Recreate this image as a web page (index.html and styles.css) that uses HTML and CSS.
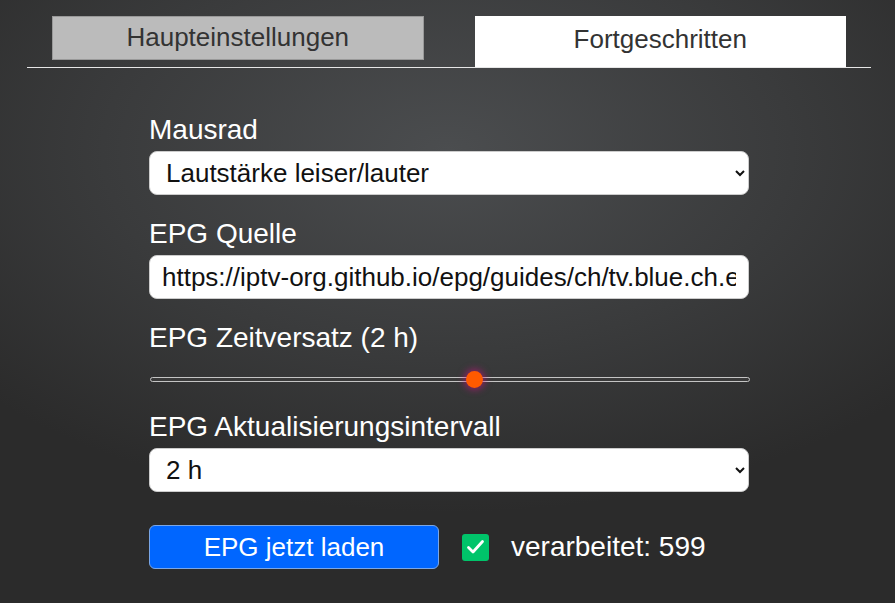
FILE: index.html
```html
<!DOCTYPE html>
<html lang="de">
<head>
    <meta charset="UTF-8">
    <meta name="viewport" content="width=device-width, initial-scale=1.0">
    <title>Einstellungen</title>
    <link rel="stylesheet" href="styles.css">
</head>
<body>
    <div class="settings">
        <div class="tabs">
            <div class="tab">Haupteinstellungen</div>
            <div class="tab active">Fortgeschritten</div>
        </div>

        <form class="panel">
            <label class="field-label" for="wheel">Mausrad</label>
            <select id="wheel" class="field">
                <option>Lautstärke leiser/lauter</option>
                <option>Kanal wechseln</option>
            </select>

            <label class="field-label" for="epgSource">EPG Quelle</label>
            <input type="text" id="epgSource" class="field" value="https://iptv-org.github.io/epg/guides/ch/tv.blue.ch.epg.xml">

            <label class="field-label" for="epgOffset">EPG Zeitversatz (2 h)</label>
            <input type="range" id="epgOffset" class="slider" min="-24" max="24" value="2">

            <label class="field-label" for="epgInterval">EPG Aktualisierungsintervall</label>
            <select id="epgInterval" class="field">
                <option>2 h</option>
                <option>6 h</option>
                <option>12 h</option>
            </select>

            <div class="actions">
                <button type="button" class="btn">EPG jetzt laden</button>
                <span class="check">
                    <svg width="19" height="16" viewBox="0 0 19 16"><path d="M2.5 8.5 L7 13 L16.5 2.5" fill="none" stroke="white" stroke-width="2.8" stroke-linecap="round" stroke-linejoin="round"/></svg>
                </span>
                <span class="status">verarbeitet: 599</span>
            </div>
        </form>
    </div>
</body>
</html>
```

FILE: styles.css
```css
html, body {
    height: 100%;
}
body {
    margin: 0;
    font-family: "Liberation Sans", Arial, sans-serif;
    background: radial-gradient(ellipse 70% 60% at 50% 25%, #4b4d4f 0%, #3a3b3c 55%, #2b2b2b 100%);
    color: white;
    overflow: hidden;
}
.settings {
    width: 844px;
    margin-left: 27px;
    padding-top: 16px;
}
.tabs {
    display: flex;
    align-items: flex-start;
    gap: 51px;
    padding: 0 25px;
    border-bottom: 1px solid #e6e6e6;
}
.tab {
    flex: 1 1 0;
    box-sizing: border-box;
    height: 44px;
    line-height: 41px;
    text-align: center;
    font-size: 26px;
    color: #333;
    background: #bbbbbb;
    border: 1px solid #999;
}
.tab.active {
    height: 51px;
    line-height: 44px;
    background: white;
    border-color: white;
}
.panel {
    width: 600px;
    margin: 0 auto;
    padding-top: 46px;
    display: flex;
    flex-direction: column;
}
.field-label {
    font-size: 28px;
    line-height: 32px;
    margin-bottom: 5px;
}
.field {
    box-sizing: border-box;
    width: 600px;
    height: 44px;
    margin: 0 0 23px;
    padding: 0 12px;
    font-family: "Liberation Sans", Arial, sans-serif;
    font-size: 26px;
    color: #111;
    background: white;
    border: 1px solid #ccc;
    border-radius: 8px;
    outline: none;
}
.slider {
    -webkit-appearance: none;
    appearance: none;
    width: 600px;
    height: 20px;
    margin: 10px 0 22px 1px;
    background: transparent;
}
.slider::-webkit-slider-runnable-track {
    height: 5px;
    background: #3a3a3a;
    border: 1px solid #c4c4c4;
    border-radius: 3px;
    box-sizing: border-box;
}
.slider::-webkit-slider-thumb {
    -webkit-appearance: none;
    width: 17px;
    height: 17px;
    margin-top: -7px;
    border-radius: 50%;
    background: #ff5a00;
    box-shadow: 0 0 7px 2px rgba(200, 20, 130, 0.6);
}
.actions {
    display: flex;
    align-items: center;
    margin-top: 10px;
}
.btn {
    width: 290px;
    height: 44px;
    font-family: "Liberation Sans", Arial, sans-serif;
    font-size: 26px;
    color: white;
    background: #0066ff;
    border: 1px solid #7aa6e6;
    border-radius: 6px;
}
.check {
    display: flex;
    align-items: center;
    justify-content: center;
    width: 27px;
    height: 27px;
    margin-left: 23px;
    background: #00c46a;
    border-radius: 3px;
}
.status {
    margin-left: 22px;
    font-size: 28px;
}
```
